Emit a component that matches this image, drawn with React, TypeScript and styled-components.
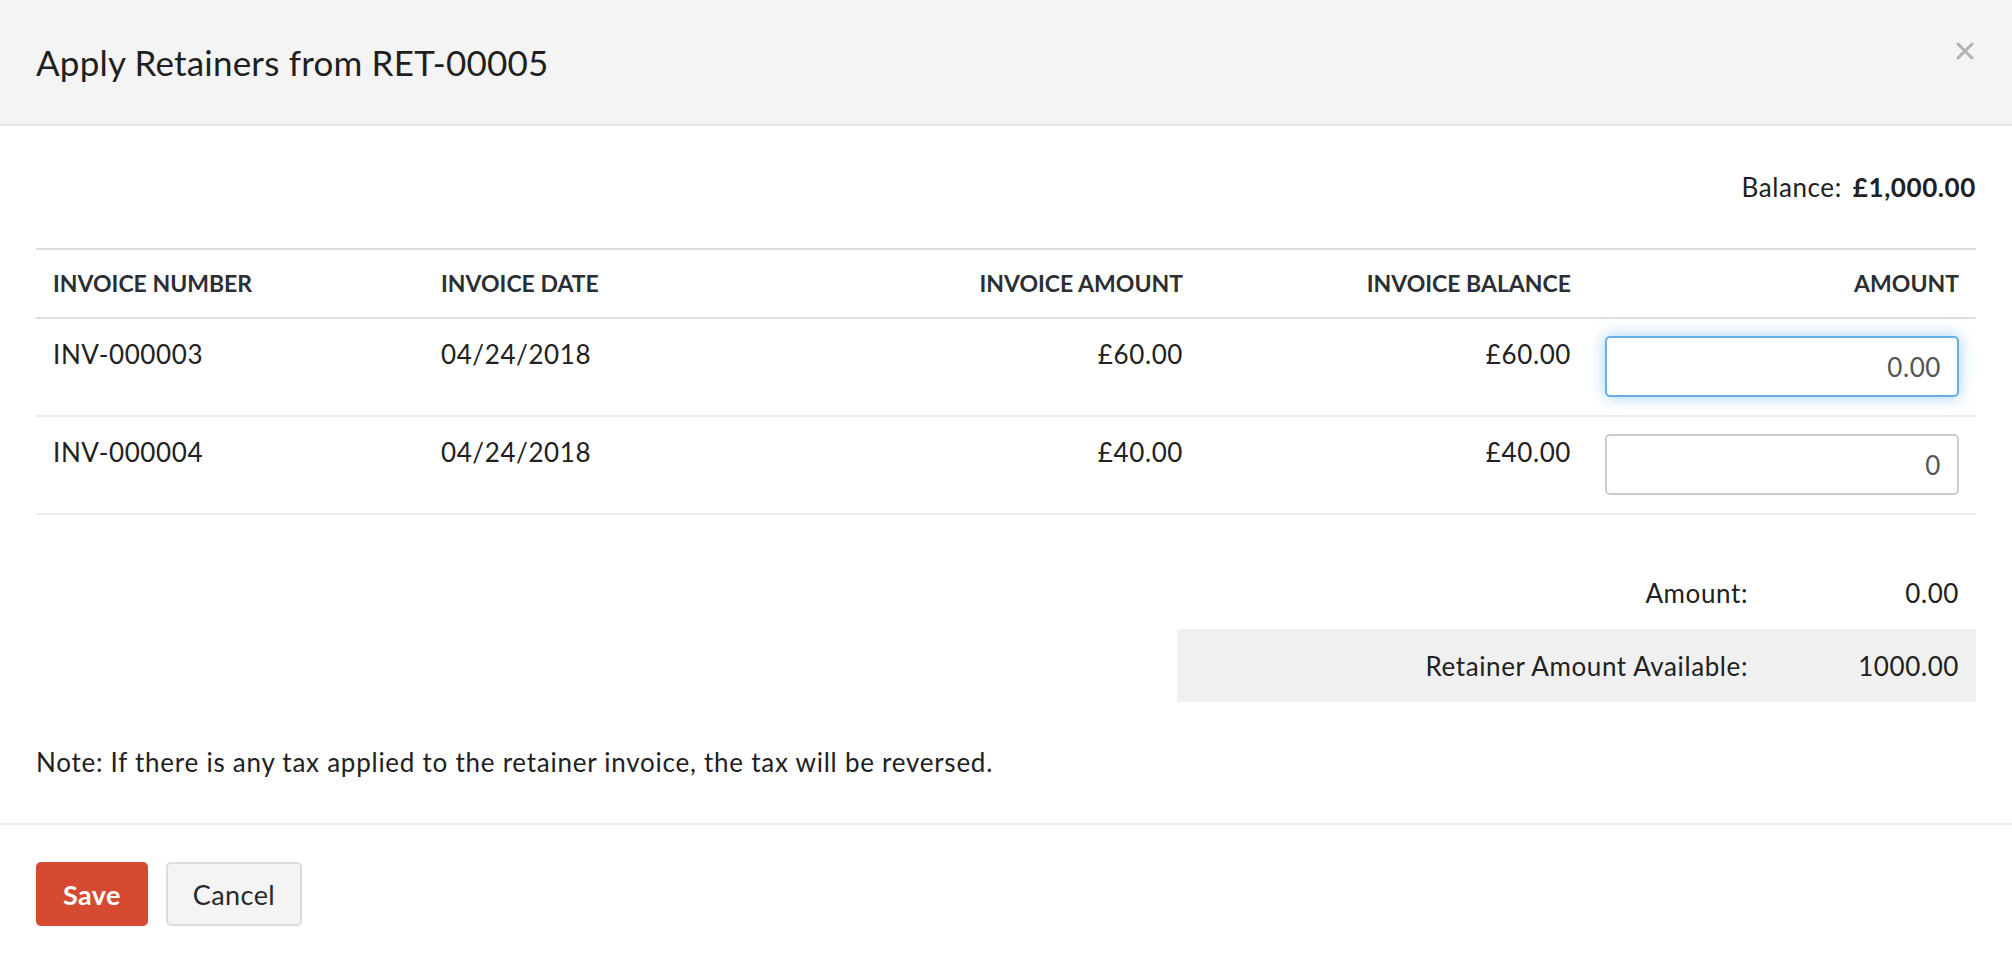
import { createGlobalStyle } from 'styled-components';
import styled from 'styled-components';

const GlobalStyle = createGlobalStyle`
  html, body {
    margin: 0;
    padding: 0;
    background: #fff;
  }
  body {
    font-family: Lato, 'Open Sans', 'Liberation Sans', sans-serif;
    color: #212121;
    letter-spacing: 0.6px;
  }
`;

const Modal = styled("div")`
  width: 100%;
  height: 100vh;
  display: flex;
  flex-direction: column;
  background: #fff;
`;

const Header = styled("header")`
  height: 124px;
  display: flex;
  justify-content: space-between;
  align-items: center;
  padding: 0 38px 0 36px;
  background: #f4f4f4;
  border-bottom: 2px solid #eaeaea;
`;

const Title = styled("h4")`
  margin: 0;
  font-size: 35px;
  font-weight: 400;
  letter-spacing: 0.2px;
  color: #1f1f1f;
`;

const CloseButton = styled("button")`
  align-self: flex-start;
  margin-top: 42px;
  padding: 0;
  border: 0;
  background: none;
  width: 18px;
  height: 18px;
  display: flex;
  cursor: pointer;
`;

const Body = styled("div")`
  padding: 43px 36px;
`;

const BalanceRow = styled("div")`
  display: flex;
  justify-content: flex-end;
  gap: 11px;
  font-size: 26px;
  line-height: 36px;

  strong {
    font-weight: 700;
  }
`;

const Table = styled("table")`
  width: 100%;
  margin-top: 43px;
  border-collapse: collapse;
  table-layout: fixed;
`;

const Th = styled("th")<{ $right?: boolean }>`
  padding: 20px 17px;
  line-height: 27px;
  font-size: 23px;
  font-weight: 700;
  letter-spacing: 0;
  text-transform: uppercase;
  color: #2b2f33;
  text-align: ${({ $right }) => ($right ? 'right' : 'left')};
  border-top: 2px solid #dddddd;
  border-bottom: 2px solid #dddddd;
`;

const Td = styled("td")<{ $right?: boolean }>`
  padding: 17px 17px 18px;
  vertical-align: top;
  font-size: 26px;
  line-height: 36px;
  text-align: ${({ $right }) => ($right ? 'right' : 'left')};
  border-bottom: 2px solid #eeeeee;
`;

const AmountInput = styled("input")<{ $focused?: boolean }>`
  box-sizing: border-box;
  display: block;
  width: 100%;
  height: 61px;
  padding: 0 16px;
  border: 2px solid ${({ $focused }) => ($focused ? '#66afe9' : '#cccccc')};
  border-radius: 5px;
  box-shadow: ${({ $focused }) => ($focused ? '0 0 16px rgba(102, 175, 233, 0.6)' : 'none')};
  font-family: inherit;
  font-size: 26px;
  letter-spacing: 0.6px;
  color: #555;
  text-align: right;
  outline: none;
`;

const Summary = styled("div")`
  width: 799px;
  margin: 41px 0 0 auto;
`;

const SummaryRow = styled("div")<{ $shaded?: boolean }>`
  display: grid;
  grid-template-columns: 1fr 228px;
  align-items: center;
  height: 73px;
  font-size: 26px;
  background: ${({ $shaded }) => ($shaded ? '#f0f0f0' : 'transparent')};

  span {
    text-align: right;
  }
  span + span {
    padding-right: 17px;
  }
`;

const Note = styled("p")`
  margin: 42px 0 0;
  font-size: 26px;
  line-height: 36px;
  letter-spacing: 0.75px;
`;

const Footer = styled("footer")`
  display: flex;
  gap: 18px;
  padding: 37px 36px 36px;
  border-top: 2px solid #eeeeee;
`;

const Button = styled("button")<{ $primary?: boolean }>`
  height: 64px;
  padding: 0 ${({ $primary }) => ($primary ? '25px' : '25px')};
  border-radius: 5px;
  border: 2px solid ${({ $primary }) => ($primary ? '#d64a31' : '#dcdcdc')};
  background: ${({ $primary }) => ($primary ? '#d64a31' : '#f4f4f4')};
  color: ${({ $primary }) => ($primary ? '#fff' : '#2a2a2a')};
  font-family: inherit;
  font-size: 27px;
  letter-spacing: 0.4px;
  font-weight: ${({ $primary }) => ($primary ? 700 : 400)};
  cursor: pointer;
`;

const invoices = [
  { number: 'INV-000003', date: '04/24/2018', amount: '£60.00', balance: '£60.00', applied: '0.00', focused: true },
  { number: 'INV-000004', date: '04/24/2018', amount: '£40.00', balance: '£40.00', applied: '0', focused: false },
];

const App = () => {
  return (
    <>
      <GlobalStyle />
      <Modal>
        <Header>
          <Title>Apply Retainers from RET-00005</Title>
          <CloseButton aria-label="Close">
            <svg width="18" height="18" viewBox="0 0 18 18">
              <path d="M2 2 L16 16 M16 2 L2 16" stroke="#b3b3b3" strokeWidth="3" strokeLinecap="round" />
            </svg>
          </CloseButton>
        </Header>

        <Body>
          <BalanceRow>
            <span>Balance:</span>
            <strong>£1,000.00</strong>
          </BalanceRow>

          <Table>
            <thead>
              <tr>
                <Th>Invoice Number</Th>
                <Th>Invoice Date</Th>
                <Th $right>Invoice Amount</Th>
                <Th $right>Invoice Balance</Th>
                <Th $right>Amount</Th>
              </tr>
            </thead>
            <tbody>
              {invoices.map((inv) => (
                <tr key={inv.number}>
                  <Td>{inv.number}</Td>
                  <Td>{inv.date}</Td>
                  <Td $right>{inv.amount}</Td>
                  <Td $right>{inv.balance}</Td>
                  <Td>
                    <AmountInput $focused={inv.focused} defaultValue={inv.applied} />
                  </Td>
                </tr>
              ))}
            </tbody>
          </Table>

          <Summary>
            <SummaryRow>
              <span>Amount:</span>
              <span>0.00</span>
            </SummaryRow>
            <SummaryRow $shaded>
              <span>Retainer Amount Available:</span>
              <span>1000.00</span>
            </SummaryRow>
          </Summary>

          <Note>Note: If there is any tax applied to the retainer invoice, the tax will be reversed.</Note>
        </Body>

        <Footer>
          <Button $primary>Save</Button>
          <Button>Cancel</Button>
        </Footer>
      </Modal>
    </>
  );
};

export default App;
